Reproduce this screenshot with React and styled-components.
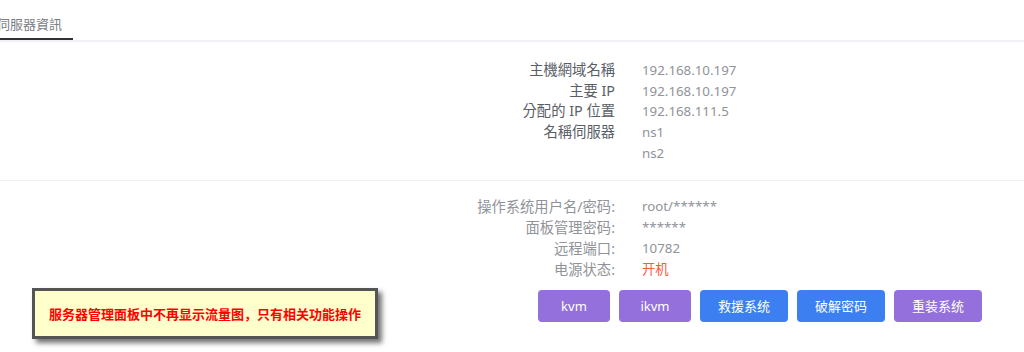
import React from 'react'
import styled, { createGlobalStyle } from 'styled-components'

const Global = createGlobalStyle`
    html, body {
        margin: 0;
        padding: 0;
        background: #fff;
    }
    body {
        font-family: "Noto Sans", "Noto Sans CJK SC", sans-serif;
        overflow: hidden;
    }
`;

const Page = styled.div`
    position: relative;
    width: 1024px;
    height: 352px;
    overflow: hidden;
`;

const TabBar = styled.div`
    display: flex;
    height: 40px;
    border-bottom: 2px solid #f0f2f5;
`;

const Tab = styled.div`
    width: 73px;
    height: 40px;
    box-sizing: border-box;
    border-bottom: 2px solid #303133;
    margin-bottom: -2px;
    padding-top: 15px;
    font-size: 13px;
    line-height: 18px;
    color: #7a7d84;
    white-space: nowrap;

    span {
        margin-left: -3px;
        font-family: "Noto Sans CJK TC", sans-serif;
    }
`;

const Section = styled.div`
    display: grid;
    grid-template-columns: 615px 1fr;
    column-gap: 27px;
    padding: ${p => p.$top}px 0 ${p => p.$bottom}px;
    border-bottom: ${p => (p.$line ? '1px solid #f0f2f5' : 'none')};
    font-size: 14px;
    line-height: ${p => p.$lh}px;
`;

const Label = styled.div`
    text-align: right;
    font-size: 14.3px;
    color: ${p => (p.$light ? '#909399' : '#5a5e66')};
    font-family: ${p => (p.$tc ? '"Noto Sans", "Noto Sans CJK TC"' : '"Noto Sans", "Noto Sans CJK SC"')}, sans-serif;
`;

const Value = styled.div`
    font-size: 13.3px;
    color: ${p => (p.$red ? '#f85a3e' : '#909399')};
`;

const Actions = styled.div`
    display: flex;
    justify-content: flex-end;
    gap: 9px;
    padding: 10px 42px 0 0;
`;

const Button = styled.button`
    height: 32px;
    min-width: 72px;
    padding: 0 18px;
    border: none;
    border-radius: 4px;
    background: ${p => (p.$kind === 'blue' ? '#3b7ff1' : '#9370db')};
    color: #fff;
    font-family: "Noto Sans", "Noto Sans CJK SC", sans-serif;
    font-size: 13px;
    cursor: pointer;
`;

const Notice = styled.div`
    position: absolute;
    left: 32px;
    top: 288px;
    width: 346px;
    height: 51px;
    box-sizing: border-box;
    display: flex;
    align-items: center;
    justify-content: center;
    background: #ffffcc;
    border: 3px solid #555;
    box-shadow: 4px 4px 5px rgba(0, 0, 0, 0.55);
    color: #ff0000;
    font-family: "Noto Sans CJK SC", sans-serif;
    font-weight: 700;
    font-size: 13px;
`;

const serverInfo = [
    ['主機網域名稱', '192.168.10.197'],
    ['主要 IP', '192.168.10.197'],
    ['分配的 IP 位置', '192.168.111.5'],
    ['名稱伺服器', 'ns1'],
    ['', 'ns2'],
]

const loginInfo = [
    ['操作系统用户名/密码:', 'root/******'],
    ['面板管理密码:', '******'],
    ['远程端口:', '10782'],
    ['电源状态:', '开机', true],
]

const buttons = [
    ['kvm', 'purple'],
    ['ikvm', 'purple'],
    ['救援系统', 'blue'],
    ['破解密码', 'blue'],
    ['重装系统', 'purple'],
]

export default function App() {
    return (
        <Page>
            <Global />
            <TabBar>
                <Tab><span>伺服器資訊</span></Tab>
            </TabBar>

            <Section $top={18} $bottom={16} $lh={20.7} $line>
                {serverInfo.map(([k, v], i) => (
                    <React.Fragment key={i}>
                        <Label $tc>{k}</Label>
                        <Value>{v}</Value>
                    </React.Fragment>
                ))}
            </Section>

            <Section $top={15} $bottom={0} $lh={21}>
                {loginInfo.map(([k, v, red], i) => (
                    <React.Fragment key={i}>
                        <Label $light>{k}</Label>
                        <Value $red={red}>{v}</Value>
                    </React.Fragment>
                ))}
            </Section>

            <Actions>
                {buttons.map(([t, kind]) => (
                    <Button key={t} $kind={kind}>{t}</Button>
                ))}
            </Actions>

            <Notice>服务器管理面板中不再显示流量图，只有相关功能操作</Notice>
        </Page>
    )
}
